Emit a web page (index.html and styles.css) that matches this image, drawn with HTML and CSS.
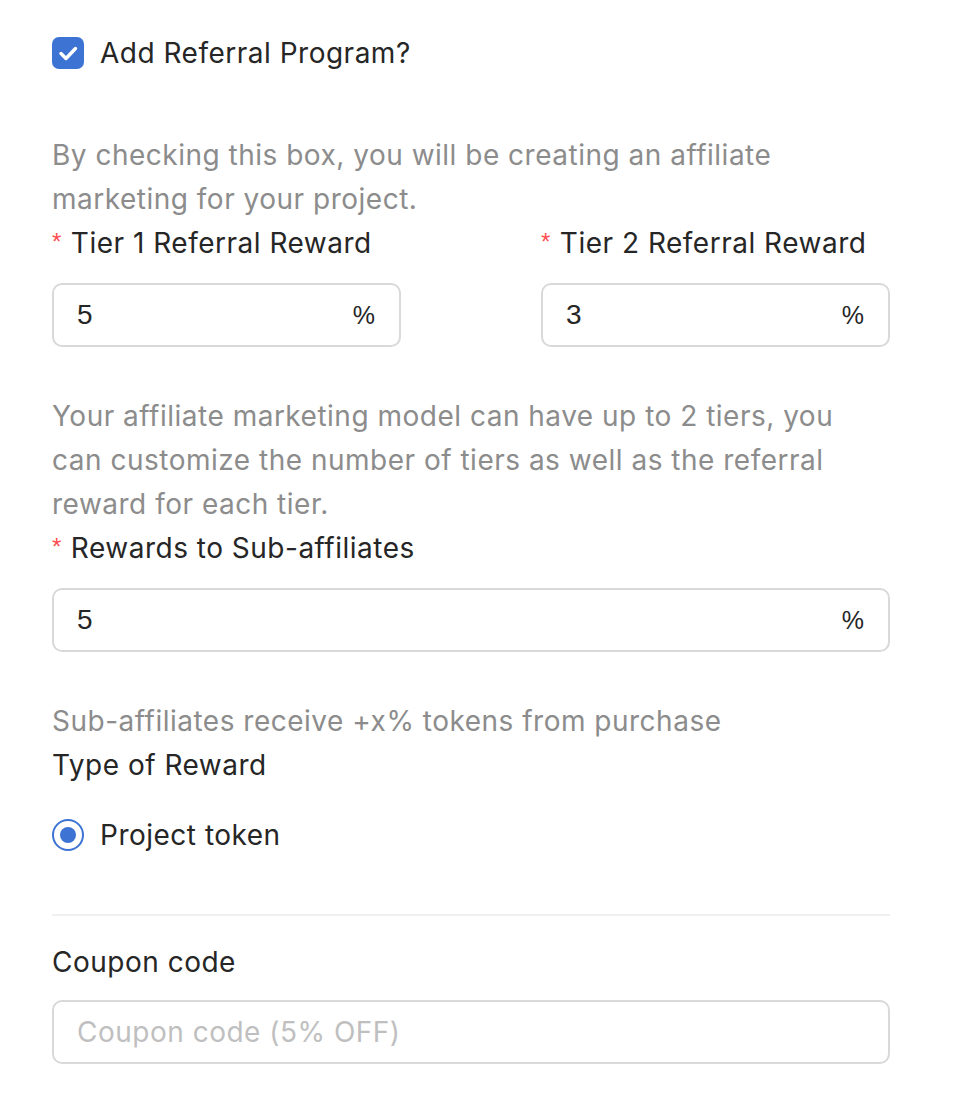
FILE: index.html
```html
<!DOCTYPE html>
<html lang="en">
<head>
<meta charset="utf-8">
<title>Referral Program</title>
<link rel="stylesheet" href="styles.css">
</head>
<body>
<div class="form">
  <div class="check-row">
    <span class="checkbox">
      <svg width="32" height="32" viewBox="0 0 32 32"><path d="M9 16.5 L14 21.5 L23.5 11.5" fill="none" stroke="#fff" stroke-width="3.4" stroke-linecap="round" stroke-linejoin="round"/></svg>
    </span>
    <span class="check-label">Add Referral Program?</span>
  </div>

  <p class="help help-first">By checking this box, you will be creating an affiliate marketing for your project.</p>

  <div class="tier-row">
    <div class="field">
      <div class="label"><span class="req">*</span>Tier 1 Referral Reward</div>
      <div class="input"><span class="value">5</span><span class="value pct">%</span></div>
    </div>
    <div class="field">
      <div class="label"><span class="req">*</span>Tier 2 Referral Reward</div>
      <div class="input"><span class="value">3</span><span class="value pct">%</span></div>
    </div>
  </div>

  <p class="help help-after">Your affiliate marketing model can have up to 2 tiers, you can customize the number of tiers as well as the referral reward for each tier.</p>

  <div class="label"><span class="req">*</span>Rewards to Sub-affiliates</div>
  <div class="input"><span class="value">5</span><span class="value pct">%</span></div>

  <p class="help help-after">Sub-affiliates receive +x% tokens from purchase</p>
  <div class="label">Type of Reward</div>

  <div class="radio-row">
    <span class="radio"><span class="dot"></span></span>
    <span class="check-label">Project token</span>
  </div>

  <div class="divider"></div>

  <div class="label coupon-label">Coupon code</div>
  <div class="input"><span class="placeholder">Coupon code (5% OFF)</span></div>
</div>
</body>
</html>
```

FILE: styles.css
```css
* { box-sizing: border-box; }

body {
  margin: 0;
  background: #ffffff;
  font-family: Inter, "Open Sans", sans-serif;
  font-size: 28px;
  letter-spacing: 0.5px;
  line-height: 44px;
  color: #262626;
}

.form {
  width: 838px;
  margin-left: 52px;
  padding-top: 21px;
}

.check-row,
.radio-row {
  display: flex;
  align-items: center;
  gap: 16px;
  height: 64px;
}

.checkbox {
  width: 32px;
  height: 32px;
  border-radius: 7px;
  background: #3d74d4;
  display: flex;
}

.check-label {
  color: #262626;
}

.help {
  margin: 0;
  color: #8c8c8c;
}

.help-first { margin-top: 48px; }
.help-after { margin-top: 47px; }

.tier-row {
  display: flex;
  justify-content: space-between;
}

.field { width: 349px; }

.label {
  line-height: 44px;
  margin-bottom: 16px;
}

.req {
  color: #ff4d4f;
  font-family: "Liberation Sans", sans-serif;
  font-size: 24px;
  margin-right: 9px;
  position: relative;
  top: -3px;
}

.input {
  height: 64px;
  border: 2px solid #d9d9d9;
  border-radius: 10px;
  padding: 0 24px 0 23px;
  display: flex;
  align-items: center;
  justify-content: space-between;
  background: #fff;
}

.value {
  font-family: "Liberation Sans", Arial, sans-serif;
  font-size: 28px;
  letter-spacing: 0;
  color: #262626;
}

.pct {
  font-size: 25px;
}

.placeholder {
  color: #bfbfbf;
}

.radio {
  width: 32px;
  height: 32px;
  border-radius: 50%;
  border: 2px solid #3d74d4;
  display: flex;
  align-items: center;
  justify-content: center;
}

.dot {
  width: 16px;
  height: 16px;
  border-radius: 50%;
  background: #3d74d4;
}

.divider {
  height: 2px;
  background: #f0f0f0;
  margin-top: 47px;
}

.coupon-label { margin-top: 24px; }
```
